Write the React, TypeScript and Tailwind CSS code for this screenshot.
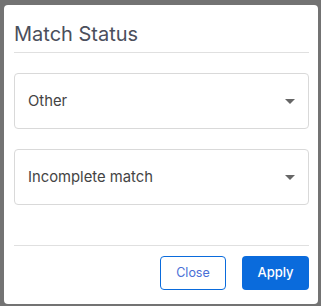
import React from 'react';

const Select: React.FC<{ value: string }> = ({ value }) => {
  return (
    <div className="flex h-[56px] items-center justify-between rounded-[4px] border border-[#d9d9d9] bg-white pl-[13px] pr-[12px]">
      <span className="text-[14.8px] text-[#444]">{value}</span>
      <svg width="10" height="5" viewBox="0 0 10 5" className="mr-[1px]">
        <path d="M0 0 L10 0 L5 5 Z" fill="#666" />
      </svg>
    </div>
  );
};

const App: React.FC = () => {
  return (
    <div className="h-[306px] w-[321px] overflow-hidden bg-[#737373] pl-[4px] pr-[3px] pt-[5px] font-['Inter',sans-serif]">
      <div className="flex h-[299px] flex-col rounded-[4px] bg-white pl-[10px] pr-[9px]">
        <div className="border-b border-[#e0e0e0] pt-[16px] pb-[5px]">
          <h2 className="text-[20px] leading-[26px] text-[#4b4f5c]">Match Status</h2>
        </div>
        <div className="flex flex-col gap-[20px] pt-[20px]">
          <Select value="Other" />
          <Select value="Incomplete match" />
        </div>
        <div className="mt-[40px] flex justify-end gap-[16px] border-t border-[#e0e0e0] pt-[10px]">
          <button className="h-[34px] w-[66px] rounded-[4px] border border-[#0a6bdc] text-[12.5px] text-[#4a6fd6]">
            Close
          </button>
          <button className="h-[34px] w-[67px] rounded-[4px] bg-[#0a6bdc] text-[13px] font-medium text-white">
            Apply
          </button>
        </div>
      </div>
    </div>
  );
};

export default App;
